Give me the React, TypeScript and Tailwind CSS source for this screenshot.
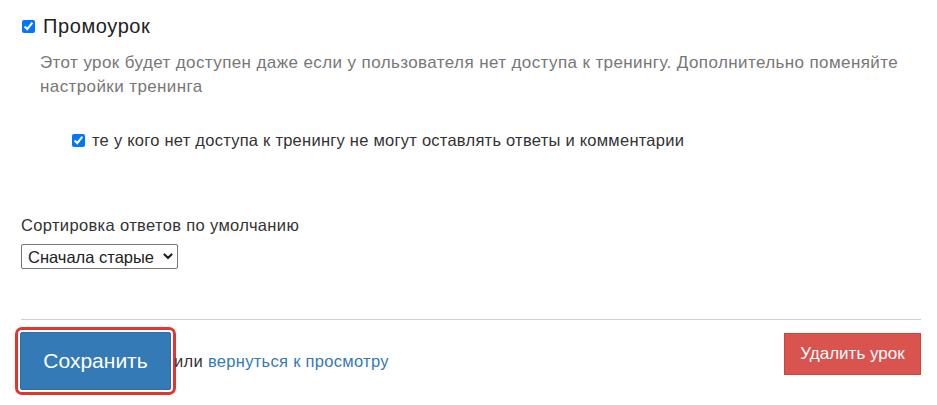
import { useState } from 'react'

const FONT = "'Liberation Sans', Arial, sans-serif"

export default function App() {
  const [promo, setPromo] = useState(true)
  const [noComments, setNoComments] = useState(true)
  const [sort, setSort] = useState('old')

  return (
    <div className="min-h-screen bg-white text-[#333]" style={{ fontFamily: FONT }}>
      <div className="pl-[21px] pr-[16px] pt-[15px]">

        {/* Промоурок */}
        <label className="flex items-center gap-[8px] h-[22px]">
          <input
            type="checkbox"
            checked={promo}
            onChange={e => setPromo(e.target.checked)}
            className="w-[13px] h-[13px] m-0 ml-[1px] accent-[#0075ff]"
          />
          <span className="text-[20px] tracking-[0.6px] text-[#222]">Промоурок</span>
        </label>

        <p className="pl-[19px] mt-[14px] text-[17px] tracking-[0.4px] leading-[24px] text-[#777] pr-[20px]">
          Этот урок будет доступен даже если у пользователя нет доступа к тренингу. Дополнительно поменяйте настройки тренинга
        </p>

        <label className="flex items-center gap-[7px] pl-[51px] mt-[29px] h-[24px]">
          <input
            type="checkbox"
            checked={noComments}
            onChange={e => setNoComments(e.target.checked)}
            className="w-[13px] h-[13px] m-0 accent-[#0075ff]"
          />
          <span className="text-[16.5px] tracking-[0.25px] text-[#333]">
            те у кого нет доступа к тренингу не могут оставлять ответы и комментарии
          </span>
        </label>

        {/* Сортировка */}
        <p className="mt-[61px] text-[16.5px] tracking-[0.35px] leading-[24px] text-[#333]">Сортировка ответов по умолчанию</p>
        <div className="relative inline-block mt-[7px]">
          <select
            value={sort}
            onChange={e => setSort(e.target.value)}
            className="appearance-none w-[157px] h-[25px] border border-[#767676] rounded-[2px] pl-[6px] pr-[20px] text-[16.5px] text-[#222] bg-white"
          >
            <option value="old">Сначала старые</option>
            <option value="new">Сначала новые</option>
          </select>
          <svg className="absolute right-[5px] top-[9px] w-[10px] h-[7px] pointer-events-none" viewBox="0 0 10 7" fill="none" stroke="#222" strokeWidth="2.2" strokeLinecap="round" strokeLinejoin="round">
            <polyline points="1.5 1.5 5 5 8.5 1.5" />
          </svg>
        </div>

        <div className="mt-[49px] border-t border-[#d0d0d0]" />

        {/* Кнопки */}
        <div className="flex items-start justify-between pt-[12px]">
          <div className="flex items-center">
            <button className="-ml-[1px] w-[151px] h-[58px] bg-[#337ab7] border border-[#2e6da4] rounded-[2px] text-white text-[21px] outline outline-[3px] outline-[#e3342f] outline-offset-[2px]">
              Сохранить
            </button>
            <span className="ml-[3px] text-[16.5px] tracking-[0.3px] text-[#333]">или</span>
            <a className="ml-[5px] text-[16.5px] tracking-[0.3px] text-[#337ab7]">вернуться к просмотру</a>
          </div>
          <button className="mt-[1px] w-[137px] h-[42px] bg-[#d9534f] border border-[#d43f3a] text-white text-[17px]">
            Удалить урок
          </button>
        </div>
      </div>
    </div>
  )
}
